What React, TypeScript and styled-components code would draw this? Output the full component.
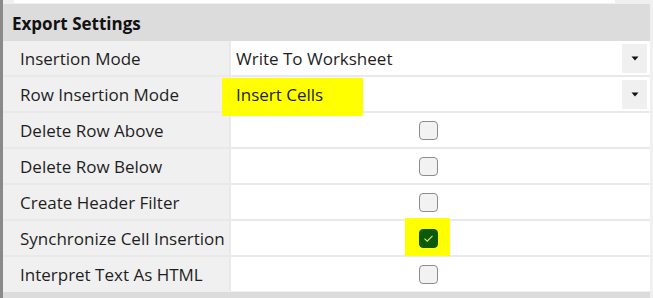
import React from 'react';
import styled, { createGlobalStyle } from 'styled-components';

const GlobalStyle = createGlobalStyle`
  html, body {
    margin: 0;
    padding: 0;
    background: #f0f0f0;
  }
  body {
    font-family: "Open Sans", "Noto Sans", sans-serif;
    color: #1a1a1a;
  }
`;

const Frame = styled.div`
  width: 653px;
  height: 298px;
  overflow: hidden;
  display: flex;
  flex-direction: column;
  border-left: 3px solid #8a8a8a;
  box-sizing: border-box;
  background: #f0f0f0;
`;

const TopStrip = styled.div`
  height: 3px;
  margin-left: 11px;
  width: 601px;
  background: #ffffff;
  margin-bottom: 1px;
`;

const Panel = styled.div`
  width: 647px;
  display: flex;
  flex-direction: column;
`;

const Header = styled.div`
  height: 37px;
  flex-shrink: 0;
  background: #dcdcdc;
  display: flex;
  align-items: center;
  padding-left: 9px;
  padding-top: 2px;
  box-sizing: border-box;
  font-weight: 700;
  font-size: 17px;
  color: #111;
`;

const NextHeader = styled.div`
  height: 6px;
  margin-top: 1px;
  background: #dcdcdc;
`;

const Grid = styled.div`
  display: grid;
  grid-template-columns: 226px 1fr;
  column-gap: 2px;
  row-gap: 2px;
  background: #e9e9e9;
`;

const LabelCell = styled.div`
  height: 34px;
  background: #f0f0f0;
  display: flex;
  align-items: center;
  padding-left: 17px;
  padding-top: 1px;
  box-sizing: border-box;
  font-size: 17px;
  color: #1e1e1e;
  white-space: nowrap;
`;

const ValueCell = styled.div<{ $center?: boolean }>`
  position: relative;
  height: 34px;
  background: #ffffff;
  display: flex;
  align-items: center;
  justify-content: ${p => (p.$center ? 'center' : 'flex-start')};
  padding-left: ${p => (p.$center ? '0' : '5px')};
  padding-right: 25px;
  font-size: 17px;
  color: #1e1e1e;
`;

const ValueText = styled.span`
  position: relative;
  z-index: 2;
  padding-top: 1px;
`;

const Highlight = styled.div`
  position: absolute;
  background: #ffff00;
  z-index: 1;
`;

const DropButton = styled.div`
  position: absolute;
  right: 3px;
  top: 3px;
  width: 25px;
  height: 29px;
  background: #f0f0f0;
  display: flex;
  align-items: center;
  justify-content: center;
`;

const CheckWrap = styled.div`
  position: relative;
  width: 19px;
  height: 19px;
`;

const CheckBox = styled.div<{ $checked?: boolean }>`
  position: relative;
  z-index: 2;
  width: 19px;
  height: 19px;
  box-sizing: border-box;
  border-radius: 4px;
  border: 1.5px solid ${p => (p.$checked ? '#0b5a0b' : '#8c8c8c')};
  background: ${p => (p.$checked ? '#0b5a0b' : '#f2f2f2')};
  display: flex;
  align-items: center;
  justify-content: center;
`;

const Caret = () => (
  <svg width="8" height="5" viewBox="0 0 8 5">
    <path d="M0.5 0.5 H7.5 L4 4.5 Z" fill="#111" />
  </svg>
);

const Tick = () => (
  <svg width="11" height="9" viewBox="0 0 11 9">
    <path d="M1.5 4.6 L4.2 7.2 L9.5 1.8" fill="none" stroke="#d6e86a" strokeWidth="1.2" />
  </svg>
);

type Row =
  | { label: string; kind: 'select'; value: string; mark?: boolean }
  | { label: string; kind: 'check'; checked: boolean; mark?: boolean };

const rows: Row[] = [
  { label: 'Insertion Mode', kind: 'select', value: 'Write To Worksheet' },
  { label: 'Row Insertion Mode', kind: 'select', value: 'Insert Cells', mark: true },
  { label: 'Delete Row Above', kind: 'check', checked: false },
  { label: 'Delete Row Below', kind: 'check', checked: false },
  { label: 'Create Header Filter', kind: 'check', checked: false },
  { label: 'Synchronize Cell Insertion', kind: 'check', checked: true, mark: true },
  { label: 'Interpret Text As HTML', kind: 'check', checked: false },
];

export default function App() {
  return (
    <>
      <GlobalStyle />
      <Frame>
        <TopStrip />
        <Panel>
          <Header>Export Settings</Header>
          <Grid>
            {rows.map(r => (
              <React.Fragment key={r.label}>
                <LabelCell>{r.label}</LabelCell>
                {r.kind === 'select' ? (
                  <ValueCell>
                    {r.mark && <Highlight style={{ left: -9, top: 1, width: 141, height: 38 }} />}
                    <ValueText>{r.value}</ValueText>
                    <DropButton>
                      <Caret />
                    </DropButton>
                  </ValueCell>
                ) : (
                  <ValueCell $center>
                    <CheckWrap>
                      {r.mark && <Highlight style={{ left: -14, top: -11, width: 45, height: 38 }} />}
                      <CheckBox $checked={r.checked}>{r.checked && <Tick />}</CheckBox>
                    </CheckWrap>
                  </ValueCell>
                )}
              </React.Fragment>
            ))}
          </Grid>
          <NextHeader />
        </Panel>
      </Frame>
    </>
  );
}
